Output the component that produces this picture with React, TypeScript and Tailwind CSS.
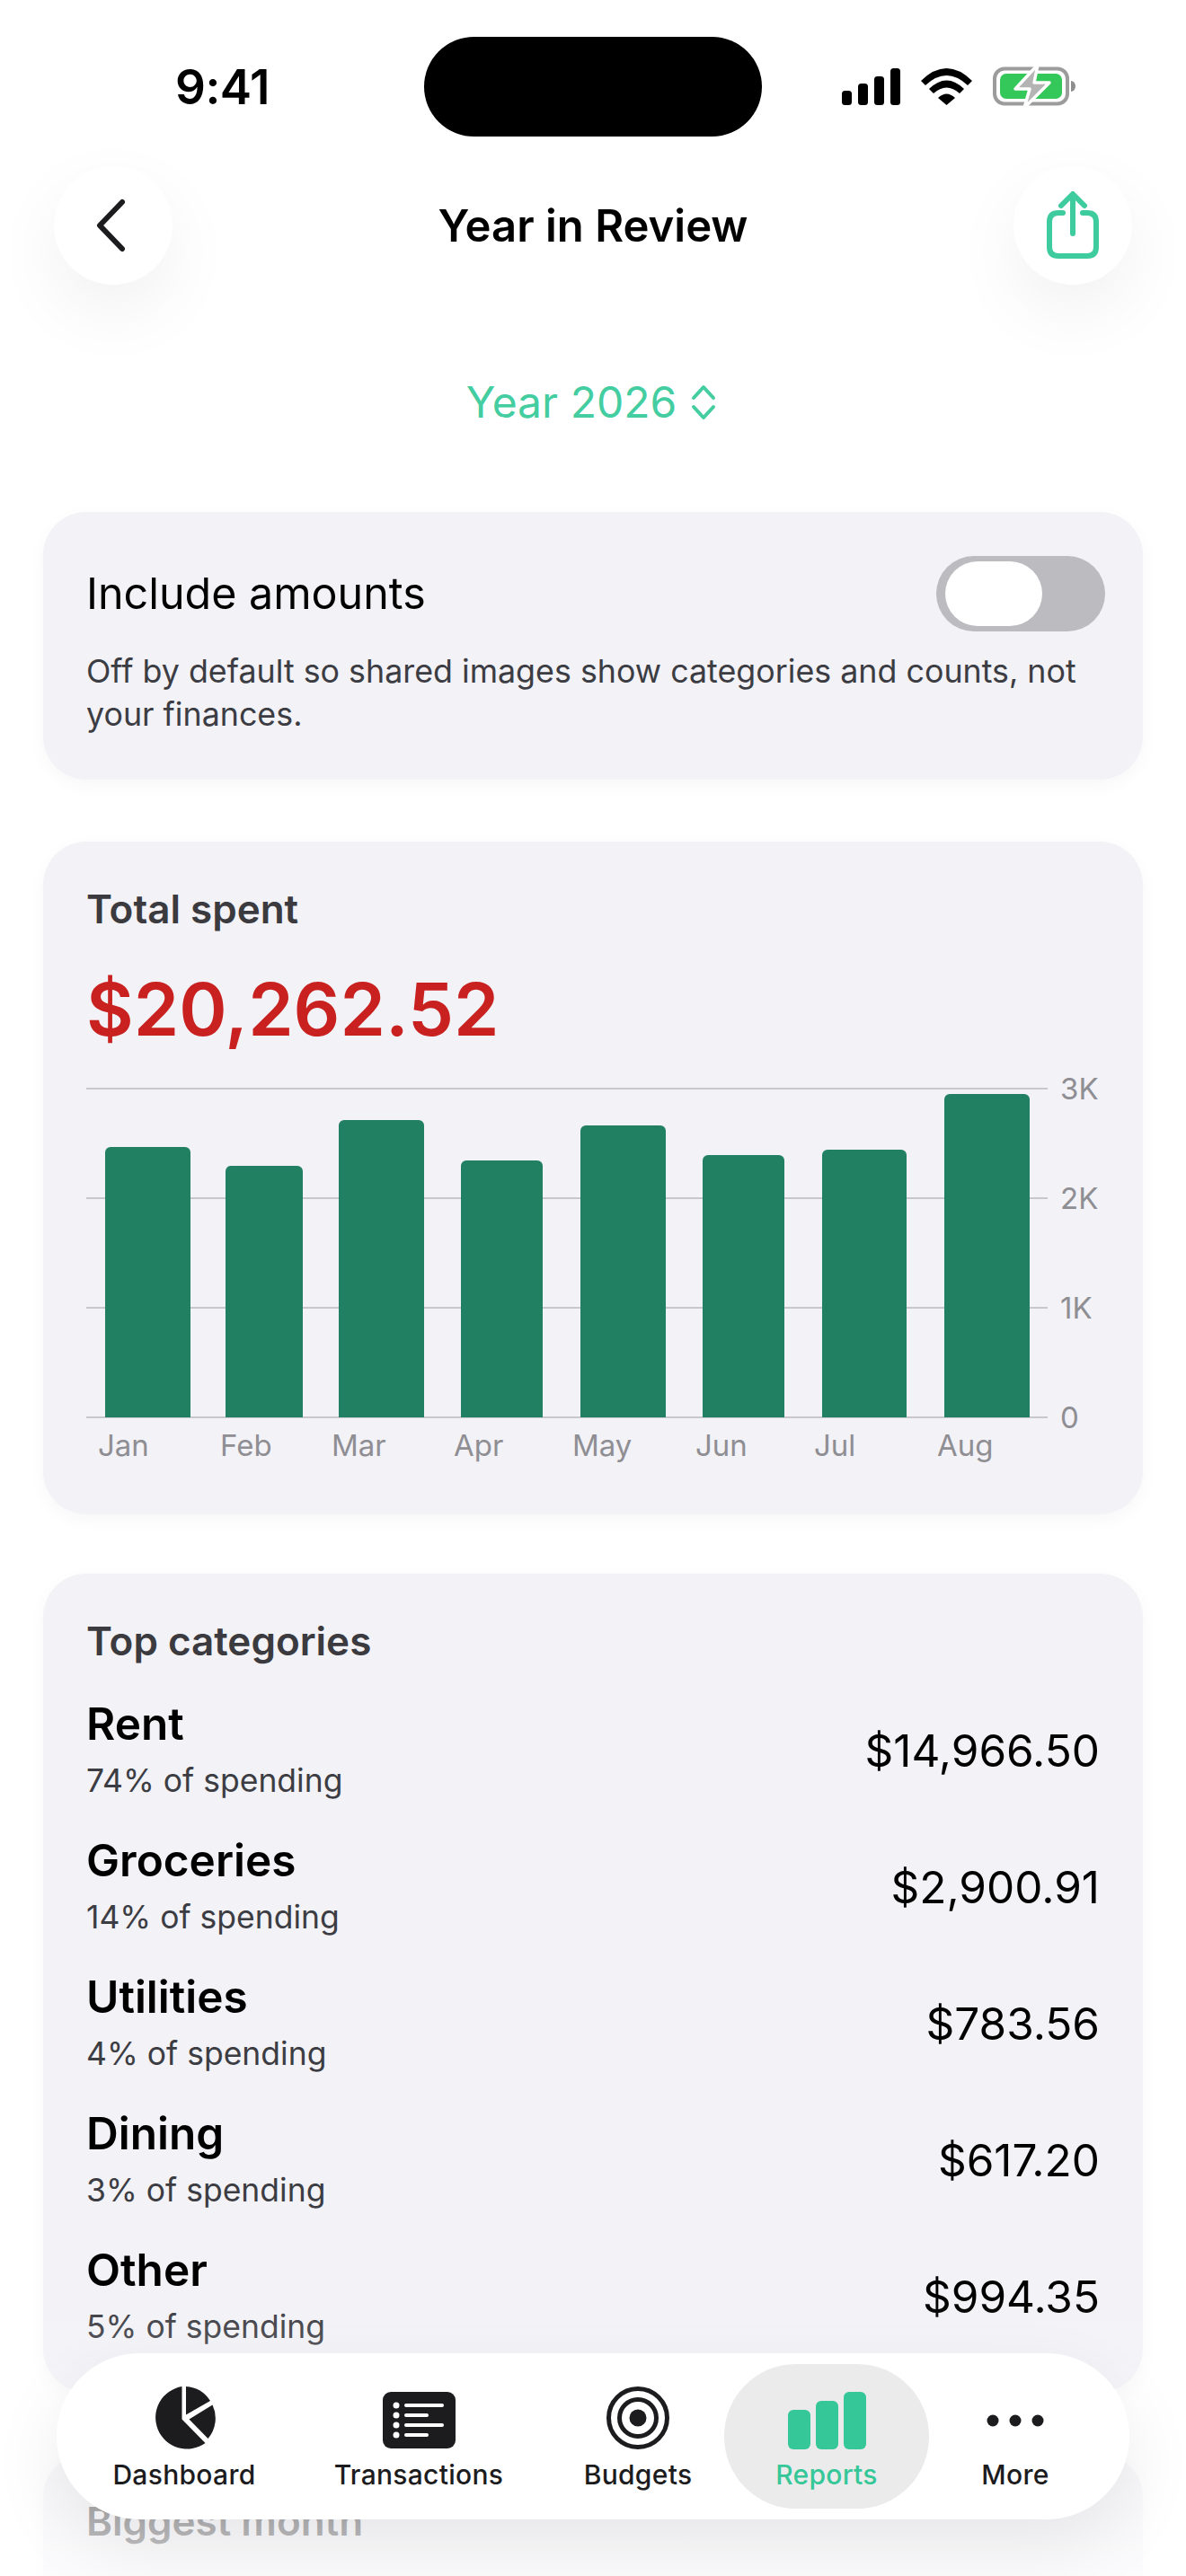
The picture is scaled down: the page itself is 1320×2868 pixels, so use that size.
import React from "react";

const font = { fontFamily: "Inter, 'Liberation Sans', sans-serif" };

const bars = [
  { x: 21, w: 95, top: 1278 },
  { x: 155, w: 86, top: 1299 },
  { x: 281, w: 95, top: 1248 },
  { x: 417, w: 91, top: 1293 },
  { x: 550, w: 95, top: 1254 },
  { x: 686, w: 91, top: 1287 },
  { x: 819, w: 94, top: 1281 },
  { x: 955, w: 95, top: 1219 },
];
const months = [
  ["Jan", 13],
  ["Feb", 149],
  ["Mar", 273],
  ["Apr", 409],
  ["May", 541],
  ["Jun", 678],
  ["Jul", 810],
  ["Aug", 947],
] as const;

const rows = [
  ["Rent", "74% of spending", "$14,966.50"],
  ["Groceries", "14% of spending", "$2,900.91"],
  ["Utilities", "4% of spending", "$783.56"],
  ["Dining", "3% of spending", "$617.20"],
  ["Other", "5% of spending", "$994.35"],
];

function Chart() {
  const top = 1195;
  const ys = [1213, 1335, 1457, 1579];
  const labels = ["3K", "2K", "1K", "0"];
  return (
    <svg width="1160" height="440" viewBox="0 0 1160 440" className="mt-[18px] block">
      {ys.map((y, i) => (
        <React.Fragment key={y}>
          <line x1="0" x2="1070" y1={y - top} y2={y - top} stroke="#C7C7CC" strokeWidth="2" />
          <text x="1084" y={y - top + 12} fontSize="33" fill="#8E8E93" fontFamily="Inter">
            {labels[i]}
          </text>
        </React.Fragment>
      ))}
      {bars.map((b) => (
        <path
          key={b.x}
          d={`M${b.x} ${1579 - top}V${b.top - top + 6}a6 6 0 0 1 6-6H${b.x + b.w - 6}a6 6 0 0 1 6 6V${1579 - top}Z`}
          fill="#217F62"
        />
      ))}
      {months.map(([m, x]) => (
        <text key={m} x={x} y={427} fontSize="33" fill="#8E8E93" fontFamily="Inter">
          {m}
        </text>
      ))}
    </svg>
  );
}

const cardCls = "mx-12 rounded-[48px] bg-[#F2F2F7] shadow-[0_6px_20px_rgba(0,0,0,0.035)]";

function Tab({ w, label, active, children }: { w: string; label: string; active?: boolean; children: React.ReactNode }) {
  return (
    <div
      className={`${w} flex h-[161px] flex-col items-center rounded-[80px] ${active ? "bg-[#EBEBEC] text-[#36C798]" : "text-[#1C1C1E]"}`}
    >
      <div className="flex h-[95px] w-full items-end justify-center">{children}</div>
      <div className="mt-[10px] text-[30px] leading-[36px] font-medium tracking-[0.3px]">{label}</div>
    </div>
  );
}

export default function App() {
  return (
    <div style={font} className="relative h-[2868px] w-[1320px] overflow-hidden bg-white text-black">
      {/* Status bar */}
      <div className="relative flex h-[185px] items-start">
        <div className="absolute top-[66px] left-[195px] text-[53px] leading-[62px] font-semibold tracking-[-0.5px]">9:41</div>
        <div className="absolute top-[41px] left-[472px] h-[111px] w-[376px] rounded-[56px] bg-black" />
        <svg className="absolute top-[70px] left-[930px]" width="280" height="52" viewBox="930 70 280 52">
          <rect x="937" y="101" width="11" height="16" rx="3.5" fill="#000" />
          <rect x="955" y="93" width="11" height="24" rx="3.5" fill="#000" />
          <rect x="973" y="85" width="11" height="32" rx="3.5" fill="#000" />
          <rect x="991" y="76" width="11" height="41" rx="3.5" fill="#000" />
          <path d="M1025 90 Q1053.5 62 1082 90 L1077 95 Q1053.5 73 1030 95Z" fill="#000" />
          <path d="M1034 99 Q1053.5 80 1073 99 L1068 104 Q1053.5 91 1039 104Z" fill="#000" />
          <path d="M1044 109 Q1053.5 100 1063 109 L1053.5 117Z" fill="#000" />
          <rect x="1107" y="76.5" width="81" height="39" rx="11" fill="none" stroke="#9C9C9C" strokeWidth="4" />
          <rect x="1113" y="82" width="69" height="28" rx="7" fill="#34C759" />
          <path d="M1192 90a5 6 0 0 1 5 6a5 6 0 0 1 -5 6Z" fill="#8E8E8E" />
          <path d="M1155 72 L1130 99 H1146 L1140 120 L1168 92 H1151 Z" fill="#B4B4B4" stroke="#fff" strokeWidth="3.5" strokeLinejoin="round" />
        </svg>
      </div>

      {/* Nav */}
      <div className="flex h-[132px] items-center justify-between px-[60px]">
        <div className="flex h-[132px] w-[132px] items-center justify-center rounded-full bg-white shadow-[0_30px_80px_rgba(0,0,0,0.06)]">
          <svg width="36" height="60" viewBox="0 0 36 60" className="mr-[6px]">
            <path d="M31 4 L6 30 L31 56" fill="none" stroke="#1C1C1E" strokeWidth="6" strokeLinecap="round" strokeLinejoin="round" />
          </svg>
        </div>
        <div className="pt-[2px] text-[49px] leading-[62px] font-semibold">Year in Review</div>
        <div className="flex h-[132px] w-[132px] items-center justify-center rounded-full bg-white shadow-[0_30px_80px_rgba(0,0,0,0.06)]">
          <svg width="60" height="76" viewBox="0 0 60 76">
            <path d="M19 24 H14 Q4 24 4 34 V62 Q4 72 14 72 H46 Q56 72 56 62 V34 Q56 24 46 24 H41" fill="none" stroke="#3ECB9E" strokeWidth="6" strokeLinecap="round" />
            <path d="M30 47 V4 M17 16 L30 3 L43 16" fill="none" stroke="#3ECB9E" strokeWidth="6" strokeLinecap="round" strokeLinejoin="round" />
          </svg>
        </div>
      </div>

      {/* Year */}
      <div className="mt-[98px] flex h-[66px] items-center justify-center gap-[16px] pr-[4px] text-[#43CDA0]">
        <span className="text-[48px] leading-[60px]">Year 2026</span>
        <svg width="28" height="40" viewBox="0 0 28 40">
          <path d="M3 15 L14 3 L25 15 M3 25 L14 37 L25 25" fill="none" stroke="#43CDA0" strokeWidth="4" strokeLinecap="round" strokeLinejoin="round" />
        </svg>
      </div>

      {/* Include amounts */}
      <div className={`${cardCls} mt-[89px] h-[298px] px-12 pt-[49px]`}>
        <div className="flex items-start justify-between">
          <div className="mt-[12px] text-[48.4px] leading-[60px]">Include amounts</div>
          <div className="mr-[-6px] flex h-[84px] w-[188px] items-center rounded-full bg-[#BBBBC0] px-[10px]">
            <div className="h-[72px] w-[108px] rounded-full bg-white" />
          </div>
        </div>
        <p className="mt-[20px] text-[35.8px] leading-[48px] text-[#3C3C43]">
          Off by default so shared images show categories and counts, not your finances.
        </p>
      </div>

      {/* Total spent */}
      <div className={`${cardCls} mt-[69px] h-[749px] pl-12 pt-[49px]`}>
        <div className="text-[44px] leading-[52px] font-semibold text-[#3A3A3F]">Total spent</div>
        <div className="mt-[34px] text-[81px] leading-[104px] font-semibold text-[#C8211F]">$20,262.52</div>
        <Chart />
      </div>

      {/* Top categories */}
      <div className={`${cardCls} mt-[66px] h-[911px] px-12 pt-[49px]`}>
        <div className="text-[44px] leading-[52px] font-semibold text-[#3A3A3F]">Top categories</div>
        <div className="mt-[18px] flex flex-col">
          {rows.map(([name, sub, amt]) => (
            <div key={name} className="flex h-[152px] items-center justify-between">
              <div className="flex flex-col gap-[8px]">
                <div className="text-[49.5px] leading-[64px] font-semibold">{name}</div>
                <div className="text-[35.5px] leading-[48px] text-[#3C3C43]">{sub}</div>
              </div>
              <div className="pt-[4px] text-[49.5px] leading-[64px]">{amt}</div>
            </div>
          ))}
        </div>
      </div>

      {/* Biggest month */}
      <div className={`${cardCls} mt-[69px] h-[400px] px-12 pt-[49px]`}>
        <div className="text-[44px] leading-[52px] font-semibold text-[#3A3A3F]">Biggest month</div>
      </div>

      {/* Fade and tab bar */}
      <div className="absolute right-0 bottom-0 left-0 h-[310px] bg-gradient-to-b from-white/0 to-white/75" />
      <div className="absolute top-[2620px] left-[63px] flex h-[185px] w-[1194px] items-center rounded-[93px] bg-white pr-[31px] pl-[29px] shadow-[0_30px_80px_rgba(0,0,0,0.08)]">
        <Tab w="w-[226px]" label="Dashboard">
          <svg width="70" height="70" viewBox="0 0 70 70">
            <path d="M32.5 0 V36.5 L58.5 63 A35 35 0 1 1 32.5 0Z" fill="#1C1C1E" />
            <path d="M37 0.1 A35 35 0 0 1 64 16 L37 31.5Z" fill="#1C1C1E" />
            <path d="M66.5 20.5 A35 35 0 0 1 61.5 58 L40.5 36.5Z" fill="#1C1C1E" />
          </svg>
        </Tab>
        <Tab w="w-[296px]" label="Transactions">
          <svg width="81" height="64" viewBox="0 0 81 64">
            <rect width="81" height="63" rx="9" fill="#1C1C1E" />
            <g fill="#fff">
              <circle cx="15" cy="15" r="3.5" />
              <circle cx="15" cy="26" r="3.5" />
              <circle cx="15" cy="37" r="3.5" />
              <circle cx="15" cy="48" r="3.5" />
              <rect x="24" y="13" width="44" height="4" rx="2" />
              <rect x="24" y="24" width="27" height="4" rx="2" />
              <rect x="24" y="35" width="44" height="4" rx="2" />
              <rect x="24" y="46" width="27" height="4" rx="2" />
            </g>
          </svg>
        </Tab>
        <Tab w="w-[192px]" label="Budgets">
          <svg width="70" height="70" viewBox="0 0 70 70">
            <circle cx="35" cy="35" r="32.5" fill="none" stroke="#1C1C1E" strokeWidth="5" />
            <circle cx="35" cy="35" r="20.5" fill="none" stroke="#1C1C1E" strokeWidth="5" />
            <circle cx="35" cy="35" r="9.5" fill="#1C1C1E" />
          </svg>
        </Tab>
        <Tab w="w-[228px]" label="Reports" active>
          <svg width="87" height="64" viewBox="0 0 87 64">
            <rect x="0" y="20" width="25" height="44" rx="6" fill="#36C798" />
            <rect x="31" y="10" width="25" height="54" rx="6" fill="#36C798" />
            <rect x="62" y="0" width="25" height="64" rx="6" fill="#36C798" />
          </svg>
        </Tab>
        <Tab w="w-[192px]" label="More">
          <svg width="64" height="64" viewBox="0 0 64 64">
            <circle cx="7" cy="32" r="6.5" fill="#1C1C1E" />
            <circle cx="32" cy="32" r="6.5" fill="#1C1C1E" />
            <circle cx="57" cy="32" r="6.5" fill="#1C1C1E" />
          </svg>
        </Tab>
      </div>
    </div>
  );
}
